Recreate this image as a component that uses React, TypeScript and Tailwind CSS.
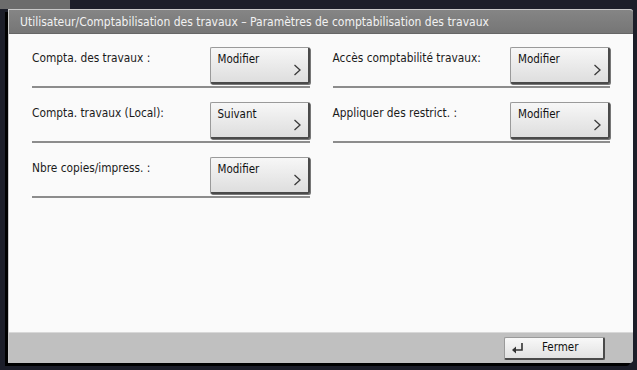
import React from 'react';

const FONT = { fontFamily: '"DejaVu Sans Condensed", "DejaVu Sans", sans-serif' };

const Chevron = () => (
  <svg width="9" height="12" viewBox="0 0 9 12" className="absolute right-[6px] bottom-[6px]">
    <polyline points="1.5,1 7,6 1.5,11" fill="none" stroke="#3a3a3a" strokeWidth="1.3" />
  </svg>
);

const NavButton = ({ label }: { label: string }) => (
  <div className="relative w-[100px] h-[37px] shrink-0 bg-gradient-to-b from-[#f7f7f7] to-[#dedede] border border-[#9a9a9a] border-r-2 border-b-2 border-r-[#4a4a4a] border-b-[#4a4a4a] rounded-[2px] shadow-[1px_1px_0_#777]">
    <span className="absolute left-[7px] top-[3px] text-[11.5px] text-[#111]">{label}</span>
    <Chevron />
  </div>
);

const Row = ({ label, button }: { label: string; button: string }) => (
  <div className="h-[55px]">
    <div className="flex justify-between items-start h-[41px] border-b-2 border-[#8c8c8c]">
      <span className="pt-[3px] text-[11.8px] text-[#1a1a1a]">{label}</span>
      <NavButton label={button} />
    </div>
  </div>
);

export default function App() {
  return (
    <div className="w-[637px] h-[370px] bg-[#1c1e29] overflow-hidden" style={FONT}>
      <div className="h-[9px] flex">
        <div className="w-[70px] bg-[#6c6c6c]" />
      </div>
      <div className="ml-[8px] w-[625px] h-[354px] flex flex-col bg-[#fafafa] rounded-tr-[3px] rounded-br-[4px] overflow-hidden shadow-[-3px_3px_0_#000] border-t border-l border-[#c8c8c8]">
        <div className="h-[24px] bg-gradient-to-b from-[#858585] to-[#767676] border-b border-[#666] flex items-center pl-[11px] text-[12px] text-[#f2f2f2] whitespace-nowrap">
          Utilisateur/Comptabilisation des travaux – Paramètres de comptabilisation des travaux
        </div>
        <div className="flex-1 grid grid-cols-2 gap-x-[23px] px-[23px] pt-[13px]">
          <div className="flex flex-col">
            <Row label="Compta. des travaux :" button="Modifier" />
            <Row label="Compta. travaux (Local):" button="Suivant" />
            <Row label="Nbre copies/impress. :" button="Modifier" />
          </div>
          <div className="flex flex-col">
            <Row label="Accès comptabilité travaux:" button="Modifier" />
            <Row label="Appliquer des restrict. :" button="Modifier" />
          </div>
        </div>
        <div className="h-[31px] bg-[#c0c0c0] border-t border-[#d8d8d8] flex justify-end items-start pt-[4px] pr-[28px]">
          <div className="w-[101px] h-[23px] flex items-center bg-gradient-to-b from-[#f8f8f8] to-[#e2e2e2] border border-[#9a9a9a] border-r-2 border-b-2 border-r-[#4a4a4a] border-b-[#4a4a4a] rounded-[2px]">
            <svg width="14" height="12" viewBox="0 0 14 12" className="ml-[6px]">
              <polyline points="11,1 11,8 3,8" fill="none" stroke="#333" strokeWidth="1.6" />
              <polygon points="1,8 5,4.5 5,11.5" fill="#333" />
            </svg>
            <span className="ml-[17px] text-[11.5px] text-[#111]">Fermer</span>
          </div>
        </div>
      </div>
    </div>
  );
}
